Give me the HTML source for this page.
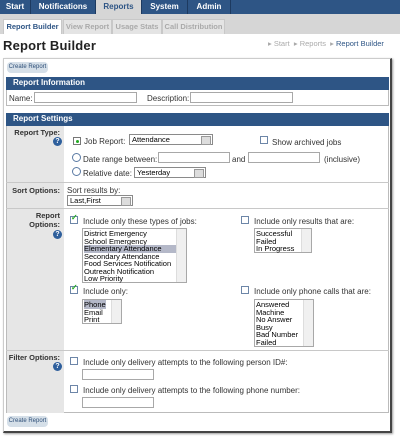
<!DOCTYPE html>
<html><head><style>
*{margin:0;padding:0;box-sizing:border-box}
body{width:400px;height:440px;background:#fff;font-family:"Liberation Sans",sans-serif;font-size:8px;color:#333;position:relative;overflow:hidden}
.a{position:absolute;white-space:nowrap}
.nav{background:#2e5585;top:0;left:0;width:400px;height:14px}
.t{position:absolute;top:0;height:14px;color:#fff;font-weight:bold;font-size:8px;line-height:14px;text-align:center;border-right:1px solid #1d3a60}
.sub{top:14px;left:0;width:400px;height:20px;background:#d6d6d6}
.st{position:absolute;top:19px;height:15px;background:#e4e4e4;color:#aaa;font-weight:bold;font-size:7.5px;line-height:14px;text-align:center;border:1px solid #c8c8c8;border-bottom:none}
.hdr{background:#2e5585;color:#fff;font-weight:bold;font-size:8px;line-height:12px;padding-left:7px;height:13px}
.btn{background:#d5dfe8;border-radius:4px;color:#2e4f78;font-size:6px;line-height:11px;text-align:center;height:11px;width:41px}
.in{border:1px solid #a8a8a8;background:#fff;height:11px}
.sel{border:1px solid #8a8a8a;background:#fff;height:11px;font-size:7.5px;line-height:9px;padding-left:2px;color:#000}
.sel:after{content:"";position:absolute;right:1px;top:1px;width:8px;height:7px;background:#ddd;border:1px solid #999}
.cb{width:8px;height:8px;border:1px solid #6d86a8;background:#fff}
.rd{width:9px;height:9px;border:1px solid #5a7aa4;border-radius:50%;background:#fff}
.lab{background:#e6e6e6;left:7px;width:57px}
.lt{font-weight:bold;text-align:right;right:4px;color:#333;font-size:7.5px}
.help{width:9px;height:9px;border-radius:50%;background:#2e5f9c;color:#fff;font-size:7px;font-weight:bold;text-align:center;line-height:9px}
.lb{border:1px solid #a8a8a8;background:#fff;font-size:7.5px;line-height:7.5px;color:#000;padding:1px 0 0 1px}
.lb .sb{position:absolute;right:0;top:0;bottom:0;width:10px;background:#f0f0f0;border-left:1px solid #ddd}
.row{left:6px;width:383px;border-top:1px solid #c8c8c8}
</style></head><body>
<div class="a nav"></div>
<div class="t" style="left:0;width:31px">Start</div>
<div class="t" style="left:31px;width:65px">Notifications</div>
<div class="t" style="left:96px;width:46px;background:#d6d6d6;color:#2e5585">Reports</div>
<div class="t" style="left:142px;width:46px">System</div>
<div class="t" style="left:188px;width:43px">Admin</div>
<div class="a sub"></div>
<div class="st" style="left:3px;width:59px;background:#fff;color:#2e5585">Report Builder</div>
<div class="st" style="left:63px;width:49px">View Report</div>
<div class="st" style="left:112px;width:50px">Usage Stats</div>
<div class="st" style="left:162px;width:63px">Call Distribution</div>
<div class="a" style="left:3px;top:38px;font-size:13px;font-weight:bold;color:#222;letter-spacing:0.2px">Report Builder</div>
<div class="a" style="left:268px;top:39px;font-size:7.5px;color:#aaa">▸ Start &nbsp;▸ Reports &nbsp;▸ <b style="color:#2e5585;font-weight:normal">Report Builder</b></div>
<div class="a" style="left:3px;top:58px;width:389px;height:375px;border:1px solid #ccc;border-right:2px solid #444;border-bottom:2px solid #444;box-shadow:1px 1px 2px #999"></div>
<div class="a btn" style="left:7px;top:62px">Create Report</div>
<div class="a" style="left:6px;top:77px;width:383px;height:29px;border:1px solid #bbb"></div>
<div class="a hdr" style="left:6px;top:77px;width:383px">Report Information</div>
<div class="a" style="left:9px;top:94px">Name:</div>
<div class="a in" style="left:34px;top:92px;width:103px"></div>
<div class="a" style="left:147px;top:94px">Description:</div>
<div class="a in" style="left:190px;top:92px;width:103px"></div>
<div class="a" style="left:6px;top:113px;width:383px;height:300px;border:1px solid #bbb"></div>
<div class="a hdr" style="left:6px;top:113px;width:383px">Report Settings</div>
<div class="a lab" style="top:126px;height:287px"></div>
<div class="a row" style="top:182px"></div>
<div class="a row" style="top:208px"></div>
<div class="a row" style="top:350px"></div>
<div class="a lt" style="left:10px;width:50px;top:128px">Report Type:</div>
<div class="a help" style="left:53px;top:137px">?</div>
<div class="a cb" style="left:73px;top:137px;border-color:#777"></div><div class="a" style="left:75.5px;top:139.5px;width:3px;height:3px;background:#2a2;border-radius:50%"></div>
<div class="a" style="left:84px;top:137px">Job Report:</div>
<div class="a sel" style="left:129px;top:134px;width:84px">Attendance</div>
<div class="a cb" style="left:260px;top:136px"></div>
<div class="a" style="left:272px;top:138px">Show archived jobs</div>
<div class="a rd" style="left:72px;top:153px"></div>
<div class="a" style="left:83px;top:155px">Date range between:</div>
<div class="a in" style="left:158px;top:152px;width:72px"></div>
<div class="a" style="left:232px;top:155px">and</div>
<div class="a in" style="left:248px;top:152px;width:72px"></div>
<div class="a" style="left:324px;top:155px">(inclusive)</div>
<div class="a rd" style="left:72px;top:167px"></div>
<div class="a" style="left:83px;top:169px">Relative date:</div>
<div class="a sel" style="left:134px;top:167px;width:72px">Yesterday</div>
<div class="a lt" style="left:10px;width:50px;top:186px">Sort Options:</div>
<div class="a" style="left:67px;top:186px">Sort results by:</div>
<div class="a sel" style="left:67px;top:195px;width:66px">Last,First</div>
<div class="a lt" style="left:10px;width:50px;top:211px;line-height:9px;white-space:normal">Report<br>Options:</div>
<div class="a help" style="left:53px;top:230px">?</div>
<div class="a cb" style="left:70px;top:216px"></div><div class="a" style="left:71px;top:213px;color:#2a2;font-size:8px;font-weight:bold">✓</div>
<div class="a" style="left:83px;top:217px">Include only these types of jobs:</div>
<div class="a lb" style="left:82px;top:228px;width:105px;height:55px">District Emergency<br>School Emergency<br><span style="background:#b4b8c8;display:inline-block;width:92px">Elementary Attendance</span><br>Secondary Attendance<br>Food Services Notification<br>Outreach Notification<br>Low Priority<div class="sb"></div></div>
<div class="a cb" style="left:241px;top:216px"></div>
<div class="a" style="left:254px;top:217px">Include only results that are:</div>
<div class="a lb" style="left:254px;top:228px;width:58px;height:25px">Successful<br>Failed<br>In Progress<div class="sb"></div></div>
<div class="a cb" style="left:70px;top:286px"></div><div class="a" style="left:71px;top:283px;color:#2a2;font-size:8px;font-weight:bold">✓</div>
<div class="a" style="left:83px;top:287px">Include only:</div>
<div class="a lb" style="left:82px;top:299px;width:40px;height:25px"><span style="background:#b4b8c8">Phone</span><br>Email<br>Print<div class="sb"></div></div>
<div class="a cb" style="left:241px;top:286px"></div>
<div class="a" style="left:254px;top:287px">Include only phone calls that are:</div>
<div class="a lb" style="left:254px;top:299px;width:60px;height:48px">Answered<br>Machine<br>No Answer<br>Busy<br>Bad Number<br>Failed<div class="sb"></div></div>
<div class="a lt" style="left:5px;width:55px;top:353px">Filter Options:</div>
<div class="a help" style="left:53px;top:362px">?</div>
<div class="a cb" style="left:70px;top:357px"></div>
<div class="a" style="left:83px;top:358px">Include only delivery attempts to the following person ID#:</div>
<div class="a in" style="left:82px;top:369px;width:72px"></div>
<div class="a cb" style="left:70px;top:385px"></div>
<div class="a" style="left:83px;top:386px">Include only delivery attempts to the following phone number:</div>
<div class="a in" style="left:82px;top:397px;width:72px"></div>
<div class="a btn" style="left:7px;top:416px">Create Report</div>
</body></html>
